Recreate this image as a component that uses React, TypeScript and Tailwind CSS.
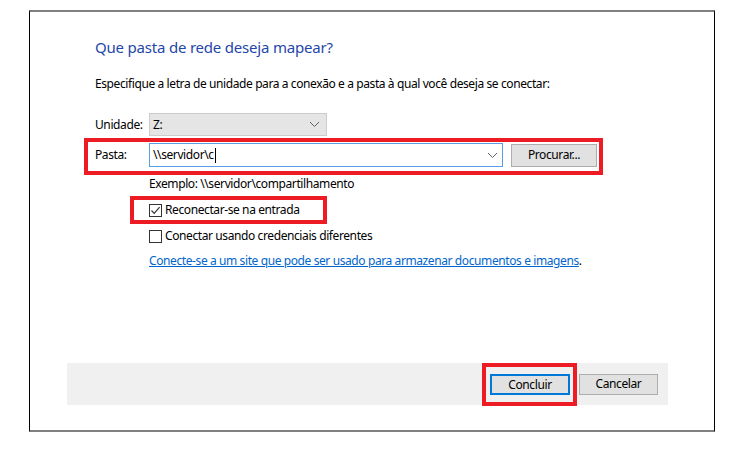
function Check({ checked }: { checked?: boolean }) {
  return (
    <span className="w-[13px] h-[13px] border border-[#333] bg-white flex items-center justify-center shrink-0">
      {checked && (
        <svg width="11" height="11" viewBox="0 0 11 11">
          <path d="M1.5 5.5 L4.2 8.3 L9.6 2.2" fill="none" stroke="#333" strokeWidth="1.2" />
        </svg>
      )}
    </span>
  )
}

function Chevron() {
  return (
    <svg width="11" height="7" viewBox="0 0 11 7">
      <path d="M1 1 L5.5 5.5 L10 1" fill="none" stroke="#606060" strokeWidth="1" />
    </svg>
  )
}

export default function App() {
  return (
    <div className="w-[755px] h-[450px] bg-white pt-[10px] pl-[29px] font-['Noto_Sans',sans-serif] text-[12px] tracking-[-0.4px] text-black">
      <div className="w-[686px] h-[422px] border-l border-r border-black border-t-2 border-b-2 border-t-[#808080] border-b-[#808080] flex flex-col">
        <div className="pl-[65px] pt-[24px]">
          <h1 className="text-[15px] tracking-[-0.2px] leading-[22px] text-[#1f47a8]">Que pasta de rede deseja mapear?</h1>
          <p className="mt-[18px] leading-[16px]">
            Especifique a letra de unidade para a conexão e a pasta à qual você deseja se conectar:
          </p>

          <div className="mt-[21px] flex items-center h-[23px]">
            <span className="w-[54px]">Unidade:</span>
            <div className="w-[178px] h-[23px] bg-[#e5e5e5] border border-[#cccccc] flex items-center justify-between pl-[3px] pr-[6px]">
              <span>Z:</span>
              <Chevron />
            </div>
          </div>

          <div className="relative mt-[7px] flex items-center h-[24px]">
            <span className="w-[54px]">Pasta:</span>
            <div className="w-[354px] h-[24px] bg-white border border-[#5a9ee6] flex items-center justify-between pl-[3px] pr-[4px]">
              <span className="flex items-center">
                \\servidor\c<span className="w-px h-[15px] bg-black ml-px" />
              </span>
              <Chevron />
            </div>
            <button className="ml-[8px] w-[86px] h-[23px] bg-[#e1e1e1] border border-[#adadad]">Procurar...</button>
            <div className="absolute left-[-11px] top-[-5px] w-[519px] h-[37px] border-[4px] border-[#ed1c24]" />
          </div>

          <div className="pl-[54px]">
            <p className="mt-[9px] leading-[16px]">Exemplo: \\servidor\compartilhamento</p>

            <div className="relative mt-[10px] flex items-center gap-[3px] h-[16px]">
              <Check checked />
              <span>Reconectar-se na entrada</span>
              <div className="absolute left-[-19px] top-[-6px] w-[197px] h-[28px] border-[4px] border-[#ed1c24]" />
            </div>

            <div className="mt-[10px] flex items-center gap-[3px] h-[16px]">
              <Check />
              <span>Conectar usando credenciais diferentes</span>
            </div>

            <p className="mt-[9px] leading-[16px]">
              <a className="text-[#0066cc] underline">
                Conecte-se a um site que pode ser usado para armazenar documentos e imagens
              </a>
              .
            </p>
          </div>
        </div>

        <div className="mt-auto mb-[25px] ml-[37px] w-[601px] h-[42px] bg-[#f0f0f0] flex items-center justify-end pr-[10px] gap-[9px]">
          <div className="relative">
            <button className="w-[80px] h-[21px] bg-[#e1e1e1] border-2 border-[#0078d7]">Concluir</button>
            <div className="absolute left-[-8px] top-[-11px] w-[95px] h-[43px] border-[4px] border-[#ed1c24]" />
          </div>
          <button className="w-[79px] h-[21px] bg-[#e1e1e1] border border-[#adadad]">Cancelar</button>
        </div>
      </div>
    </div>
  )
}
